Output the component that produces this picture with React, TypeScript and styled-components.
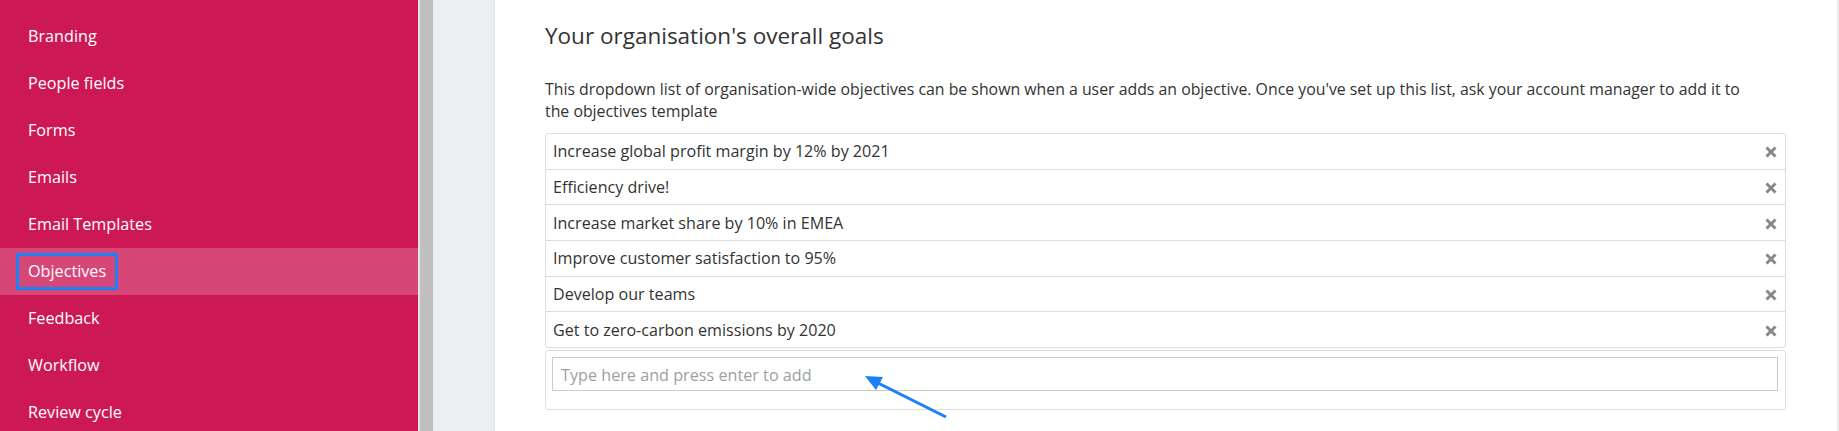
import React from "react";
import styled, { createGlobalStyle } from "styled-components";

const GlobalStyle = createGlobalStyle`
  html, body {
    margin: 0;
    padding: 0;
    height: 100%;
    overflow: hidden;
  }
  body {
    font-family: "Open Sans", "Liberation Sans", sans-serif;
    color: #333333;
  }
  #root {
    height: 100%;
  }
`;

const menu = [
  "Branding",
  "People fields",
  "Forms",
  "Emails",
  "Email Templates",
  "Objectives",
  "Feedback",
  "Workflow",
  "Review cycle",
];

const goals = [
  "Increase global profit margin by 12% by 2021",
  "Efficiency drive!",
  "Increase market share by 10% in EMEA",
  "Improve customer satisfaction to 95%",
  "Develop our teams",
  "Get to zero-carbon emissions by 2020",
];

const Page = styled.div`
  position: relative;
  display: flex;
  height: 100%;
`;

const Sidebar = styled.ul`
  width: 418px;
  flex-shrink: 0;
  margin: 0;
  padding: 13px 0 0;
  list-style: none;
  background: #cc1955;
  overflow: hidden;
`;

const NavItem = styled.li<{ $active?: boolean }>`
  display: flex;
  align-items: center;
  height: 47px;
  padding-left: 28px;
  background: ${(p) => (p.$active ? "#d64676" : "transparent")};
  color: #ffffff;
  font-size: 16.2px;
`;

const NavLabel = styled.span<{ $focused?: boolean }>`
  line-height: 31px;
  ${(p) =>
    p.$focused &&
    `
    margin-left: -12px;
    padding: 0 9px;
    border: 3px solid #1a82f7;
  `}
`;

const Gutter = styled.div`
  width: 13px;
  flex-shrink: 0;
  border-left: 2px solid #e4e4e4;
  background: #c0c0c0;
`;

const Main = styled.div`
  flex: 1;
  display: flex;
  padding: 0 2px 0 62px;
  background: #ebeff0;
`;

const Panel = styled.section`
  flex: 1;
  padding: 21px 51px 0 50px;
  background: #ffffff;
  box-shadow: -1px 0 4px rgba(0, 0, 0, 0.06);
`;

const Title = styled.h2`
  margin: 0;
  font-size: 22.5px;
  line-height: 30px;
  font-weight: 400;
  color: #333333;
`;

const Intro = styled.p`
  margin: 27px 0 11px;
  padding-right: 28px;
  font-size: 15.85px;
  line-height: 22px;
`;

const GoalList = styled.ul`
  margin: 0;
  padding: 0;
  list-style: none;
  border-radius: 3px;
`;

const GoalRow = styled.li`
  display: flex;
  align-items: center;
  justify-content: space-between;
  height: 34.7px;
  padding: 0 8px 0 7px;
  border: 1px solid #dddddd;
  margin-bottom: -1px;
  font-size: 16.1px;

  &:first-child {
    border-radius: 3px 3px 0 0;
  }
  &:last-child {
    margin-bottom: 0;
    border-radius: 0 0 3px 3px;
  }
`;

const RemoveButton = styled.button`
  display: flex;
  align-items: center;
  justify-content: center;
  width: 12px;
  height: 12px;
  padding: 0;
  margin-top: 2px;
  border: 0;
  background: none;
  cursor: pointer;
`;

const AddBox = styled.div`
  margin-top: 2px;
  padding: 6px 7px 18px 6px;
  border: 1px solid #dddddd;
  border-radius: 3px;
`;

const AddInput = styled.input`
  display: block;
  box-sizing: border-box;
  width: 100%;
  height: 34px;
  padding: 2px 8px 0;
  border: 1px solid #cccccc;
  font-family: "Open Sans", "Liberation Sans", sans-serif;
  font-size: 16.2px;
  color: #333333;
  outline: none;

  &::placeholder {
    color: #a0a0a0;
  }
`;

const Annotation = styled.svg`
  position: absolute;
  left: 0;
  top: 0;
  pointer-events: none;
`;

const CloseIcon = () => (
  <svg width="12" height="12" viewBox="0 0 12 12">
    <path
      d="M1.5 1.5 L10.5 10.5 M10.5 1.5 L1.5 10.5"
      stroke="#888888"
      strokeWidth="3"
      fill="none"
    />
  </svg>
);

export default function App() {
  return (
    <Page>
      <GlobalStyle />
      <Sidebar>
        {menu.map((name) => (
          <NavItem key={name} $active={name === "Objectives"}>
            <NavLabel $focused={name === "Objectives"}>{name}</NavLabel>
          </NavItem>
        ))}
      </Sidebar>
      <Gutter />
      <Main>
        <Panel>
          <Title>Your organisation's overall goals</Title>
          <Intro>
            This dropdown list of organisation-wide objectives can be shown when a
            user adds an objective. Once you've set up this list, ask your account
            manager to add it to the objectives template
          </Intro>
          <GoalList>
            {goals.map((g) => (
              <GoalRow key={g}>
                <span>{g}</span>
                <RemoveButton aria-label="Remove">
                  <CloseIcon />
                </RemoveButton>
              </GoalRow>
            ))}
          </GoalList>
          <AddBox>
            <AddInput placeholder="Type here and press enter to add" />
          </AddBox>
        </Panel>
      </Main>
      <Annotation width="1839" height="431">
        <line x1="946" y1="417" x2="878" y2="383" stroke="#1a80f5" strokeWidth="3" />
        <polygon points="865,376 883,377 876,390" fill="#1a80f5" />
      </Annotation>
    </Page>
  );
}
